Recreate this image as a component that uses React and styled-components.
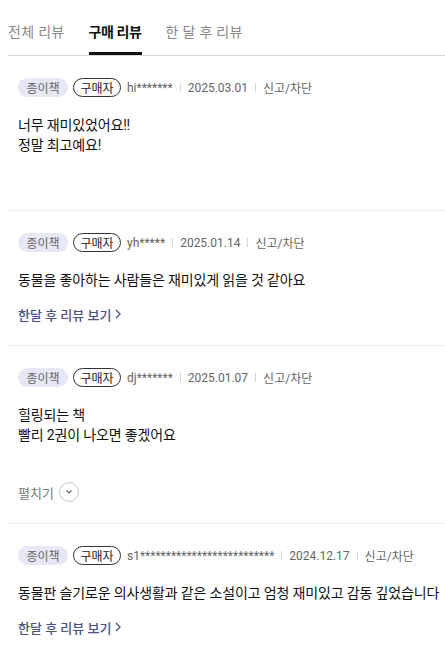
import React from "react";
import styled, { createGlobalStyle } from "styled-components";

const GlobalStyle = createGlobalStyle`
  body {
    margin: 8px 0 0 8px;
    background: #fff;
    font-family: Roboto, "Noto Sans CJK KR", sans-serif;
    color: #111;
  }
`;

const reviews = [
  {
    user: "hi*******",
    date: "2025.03.01",
    lines: ["너무 재미있었어요!!", "정말 최고예요!"],
    footer: "empty",
  },
  {
    user: "yh*****",
    date: "2025.01.14",
    lines: ["동물을 좋아하는 사람들은 재미있게 읽을 것 같아요"],
    footer: "link",
  },
  {
    user: "dj*******",
    date: "2025.01.07",
    lines: ["힐링되는 책", "빨리 2권이 나오면 좋겠어요"],
    footer: "fold",
  },
  {
    user: "s1**************************",
    date: "2024.12.17",
    lines: ["동물판 슬기로운 의사생활과 같은 소설이고 엄청 재미있고 감동 깊었습니다"],
    footer: "link",
  },
];

const App = () => {
  return (
    <>
      <GlobalStyle />
      <Tabs>
        <Tab>전체 리뷰</Tab>
        <Tab $active>구매 리뷰</Tab>
        <Tab>한 달 후 리뷰</Tab>
      </Tabs>
      <List>
        {reviews.map((r, i) => (
          <Review key={i}>
            <Meta>
              <TypeBadge>종이책</TypeBadge>
              <BuyerBadge>구매자</BuyerBadge>
              <MetaText>{r.user}</MetaText>
              <Sep />
              <MetaText>{r.date}</MetaText>
              <Sep />
              <MetaText>신고/차단</MetaText>
            </Meta>
            <Content>
              {r.lines.map((l, j) => (
                <div key={j}>{l}</div>
              ))}
            </Content>
            {r.footer === "link" && (
              <Footer>
                <MoreLink>
                  한달 후 리뷰 보기
                  <svg width="8" height="10" viewBox="0 0 8 10">
                    <path d="M2 1l4 4-4 4" fill="none" stroke="#4a5282" strokeWidth="1.3" />
                  </svg>
                </MoreLink>
              </Footer>
            )}
            {r.footer === "fold" && (
              <Footer $wide>
                <Fold>
                  펼치기
                  <FoldCircle>
                    <svg width="8" height="6" viewBox="0 0 8 6">
                      <path d="M1.5 1.5l2.5 2.5 2.5-2.5" fill="none" stroke="#666" strokeWidth="1.2" />
                    </svg>
                  </FoldCircle>
                </Fold>
              </Footer>
            )}
            {r.footer === "empty" && <Footer />}
          </Review>
        ))}
      </List>
    </>
  );
};

export default App;

const Tabs = styled.div`
  display: flex;
  gap: 24px;
  border-bottom: 1px solid #d9d9d9;
  height: 47px;
`;

const Tab = styled.div`
  display: flex;
  align-items: center;
  height: 47px;
  box-sizing: border-box;
  padding-top: 2px;
  font-size: 14px;
  letter-spacing: ${(p) => (p.$active ? "-0.4px" : "0.3px")};
  color: ${(p) => (p.$active ? "#111" : "#888")};
  font-weight: ${(p) => (p.$active ? 700 : 400)};
  border-bottom: ${(p) => (p.$active ? "3px solid #111" : "3px solid transparent")};
  margin-bottom: -2px;
`;

const List = styled.div`
  display: flex;
  flex-direction: column;
`;

const Review = styled.div`
  padding: 22px 0 21px 10px;
  border-bottom: 1px solid #ececec;
`;

const Meta = styled.div`
  display: flex;
  align-items: center;
  height: 19px;
  font-size: 12px;
`;

const TypeBadge = styled.span`
  display: inline-flex;
  align-items: center;
  justify-content: center;
  width: 50px;
  height: 19px;
  border-radius: 10px;
  background: #e7e7f6;
  color: #666;
  font-size: 12px;
`;

const BuyerBadge = styled.span`
  display: inline-flex;
  align-items: center;
  justify-content: center;
  box-sizing: border-box;
  width: 48px;
  height: 19px;
  margin-left: 5px;
  border: 1px solid #333;
  border-radius: 10px;
  color: #222;
  font-size: 12px;
`;

const MetaText = styled.span`
  color: #666;
  font-size: 12px;
  margin-left: 6px;
`;

const Sep = styled.span`
  width: 1px;
  height: 9px;
  background: #d5d5d5;
  margin-left: 7px;
  margin-right: 1px;
`;

const Content = styled.div`
  margin-top: 18px;
  font-size: 14px;
  line-height: 20px;
  letter-spacing: -0.15px;
  color: #111;
`;

const Footer = styled.div`
  display: flex;
  align-items: center;
  height: 20px;
  margin-top: ${(p) => (p.$wide ? "37px" : "14px")};
`;

const MoreLink = styled.span`
  display: inline-flex;
  align-items: center;
  gap: 3px;
  font-size: 13px;
  font-weight: 500;
  color: #4a5282;
`;

const Fold = styled.span`
  display: inline-flex;
  align-items: center;
  gap: 5px;
  font-size: 13px;
  color: #777;
`;

const FoldCircle = styled.span`
  display: inline-flex;
  align-items: center;
  justify-content: center;
  box-sizing: border-box;
  width: 20px;
  height: 20px;
  border: 1px solid #c8c8c8;
  border-radius: 50%;
`;
